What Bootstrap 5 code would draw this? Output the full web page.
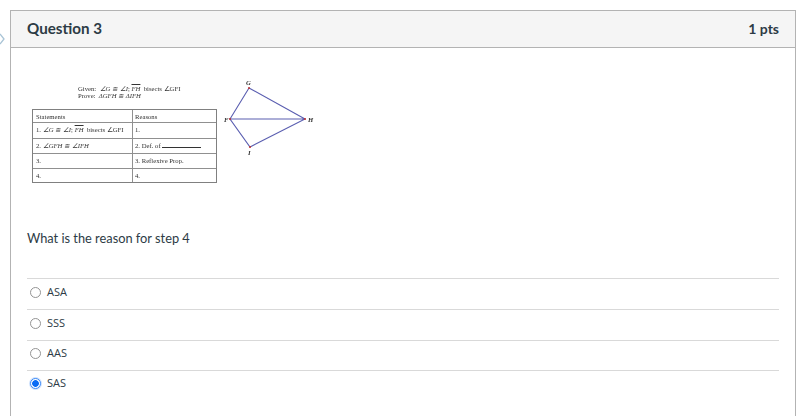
<!DOCTYPE html>
<html lang="en">
<head>
    <meta charset="UTF-8">
    <meta name="viewport" content="width=device-width, initial-scale=1.0">
    <title>Question 3</title>
    <link href="https://cdn.jsdelivr.net/npm/bootstrap@5.3.0/dist/css/bootstrap.min.css" rel="stylesheet">
    <style>
        html, body {
            height: 416px;
            overflow: hidden;
        }
        body {
            background-color: #fff;
            font-family: Lato, "Liberation Sans", sans-serif;
            color: #2d3b45;
            font-size: 12.8px;
        }
        .quiz-arrow {
            left: 0;
            top: 23px;
        }
        .quiz-panel {
            margin: 10px 0 0 10px;
            width: 786px;
            height: 420px;
            border: 1px solid #b3b3b3;
            border-bottom: 0;
        }
        .quiz-head {
            height: 37px;
            background-color: #f5f5f5;
            border-bottom: 1px solid #b3b3b3;
            padding: 0 16px 2px 16px;
            font-weight: 700;
            font-size: 15.2px;
        }
        .quiz-points {
            font-size: 14px;
        }
        .quiz-body {
            padding: 25px 16px 0 16px;
        }
        .proof-area {
            height: 122px;
            padding-left: 5px;
        }
        .proof-left {
            width: 185px;
            font-family: "Liberation Serif", serif;
            font-size: 6.7px;
            line-height: 7px;
            color: #333;
            filter: blur(0.3px);
        }
        .proof-given {
            padding: 12px 0 0 46px;
            height: 36px;
            white-space: nowrap;
        }
        .over-line {
            text-decoration: overline;
        }
        .proof-grid {
            border: 1px solid #808080;
            height: 74px;
        }
        .proof-row {
            border-bottom: 1px solid #909090;
        }
        .proof-row:nth-child(1) { height: 13px; }
        .proof-row:nth-child(2) { height: 16px; }
        .proof-row:nth-child(3) { height: 15px; }
        .proof-row:nth-child(4) { height: 15px; }
        .proof-row:last-child {
            height: 13px;
            border-bottom: 0;
        }
        .proof-cell-a {
            width: 100px;
            border-right: 1px solid #909090;
            padding: 3px 0 0 3px;
            white-space: nowrap;
        }
        .proof-cell-b {
            padding: 3px 0 0 2px;
            white-space: nowrap;
        }
        .blank-line {
            display: inline-block;
            width: 39px;
            border-bottom: 1px solid #333;
        }
        .proof-figure {
            margin: 2px 0 0 3px;
            filter: blur(0.2px);
        }
        .figure-label {
            font-family: "Liberation Serif", serif;
            font-size: 6.7px;
            font-weight: 700;
            font-style: italic;
            fill: #333;
        }
        .quiz-text {
            margin: 33px 0 30px;
            line-height: 20px;
            height: 20px;
        }
        .answer-row {
            height: 31px;
            border-top: 1px solid #d9d9d9;
            gap: 6px;
            padding: 0 0 4px 3px;
            font-family: "Open Sans", "Liberation Sans", sans-serif;
            font-size: 11px;
        }
        .answer-row:nth-child(n+5) {
            height: 30px;
        }
        .answer-row .form-check-input {
            width: 11px;
            height: 11px;
            margin: 0;
            border: 1px solid #949494;
        }
        .answer-row .form-check-input:checked {
            background-color: #fff;
            background-image: radial-gradient(circle, #0a6cf5 3px, #fff 3.7px);
            border-color: #3b8af8;
            box-shadow: 0 0 0 1px #cfe2fd;
        }
    </style>
</head>
<body>
    <div class="position-relative">
        <svg class="quiz-arrow position-absolute" width="7" height="12" viewBox="0 0 7 12">
            <path d="M0 1l4 5-4 5" fill="none" stroke="#a9c4d6" stroke-width="1.3"/>
        </svg>
        <div class="quiz-panel">
            <div class="quiz-head d-flex justify-content-between align-items-center">
                <span>Question 3</span>
                <span class="quiz-points">1 pts</span>
            </div>
            <div class="quiz-body">
                <div class="proof-area d-flex">
                    <div class="proof-left">
                        <div class="proof-given">
                            <div>Given: &nbsp;<i>∠G ≅ ∠I</i>; <i class="over-line">FH</i> &nbsp;bisects ∠GFI</div>
                            <div>Prove: &nbsp;<i>ΔGFH ≅ ΔIFH</i></div>
                        </div>
                        <div class="proof-grid">
                            <div class="proof-row d-flex"><div class="proof-cell-a">Statements</div><div class="proof-cell-b">Reasons</div></div>
                            <div class="proof-row d-flex"><div class="proof-cell-a">1. <i>∠G ≅ ∠I</i>; <i class="over-line">FH</i> &nbsp;bisects ∠GFI</div><div class="proof-cell-b">1.</div></div>
                            <div class="proof-row d-flex"><div class="proof-cell-a">2. <i>∠GFH ≅ ∠IFH</i></div><div class="proof-cell-b">2. Def. of <span class="blank-line"></span></div></div>
                            <div class="proof-row d-flex"><div class="proof-cell-a">3.</div><div class="proof-cell-b">3. Reflexive Prop.</div></div>
                            <div class="proof-row d-flex"><div class="proof-cell-a">4.</div><div class="proof-cell-b">4.</div></div>
                        </div>
                    </div>
                    <svg class="proof-figure" width="95" height="80" viewBox="0 0 95 80">
                        <path d="M29 13L85 44L30 72L10 44L85 44M10 44L29 13" fill="none" stroke="#5a5eb0" stroke-width="1.1"/>
                        <circle cx="29" cy="13" r="1" fill="#c03030"/>
                        <circle cx="85" cy="44" r="1" fill="#c03030"/>
                        <circle cx="30" cy="72" r="1" fill="#c03030"/>
                        <circle cx="10" cy="44" r="1" fill="#c03030"/>
                        <text class="figure-label" x="26" y="10">G</text>
                        <text class="figure-label" x="88" y="47">H</text>
                        <text class="figure-label" x="28" y="80">I</text>
                        <text class="figure-label" x="4" y="47">F</text>
                    </svg>
                </div>
                <p class="quiz-text">What is the reason for step 4</p>
                <div class="answer-row d-flex align-items-center"><input class="form-check-input" type="radio" name="ans"><span>ASA</span></div>
                <div class="answer-row d-flex align-items-center"><input class="form-check-input" type="radio" name="ans"><span>SSS</span></div>
                <div class="answer-row d-flex align-items-center"><input class="form-check-input" type="radio" name="ans"><span>AAS</span></div>
                <div class="answer-row d-flex align-items-center"><input class="form-check-input" type="radio" name="ans" checked><span>SAS</span></div>
            </div>
        </div>
    </div>
    <script src="https://cdn.jsdelivr.net/npm/bootstrap@5.3.0/dist/js/bootstrap.bundle.min.js"></script>
</body>
</html>
